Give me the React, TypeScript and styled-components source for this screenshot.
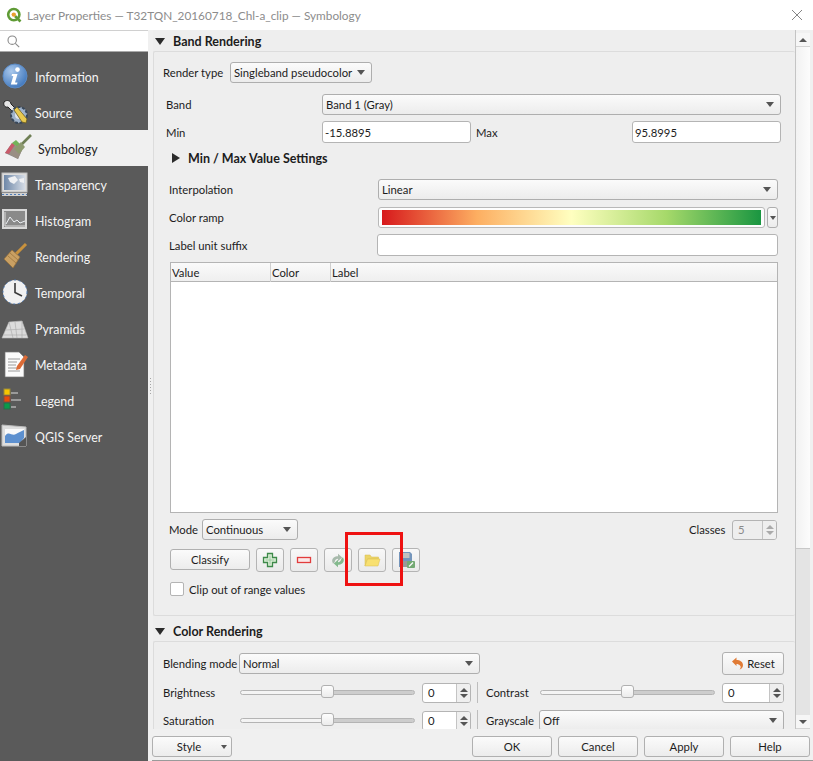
import React from 'react';
import styled, { createGlobalStyle } from 'styled-components';

const GlobalStyle = createGlobalStyle`
  html, body { margin: 0; padding: 0; background: #fff; }
  * { box-sizing: border-box; }
`;

const Window = styled.div`
  width: 813px;
  height: 761px;
  display: flex;
  flex-direction: column;
  overflow: hidden;
  background: #f0f0f0;
  color: #1c1c1c;
  font-family: Lato, 'Open Sans', sans-serif;
  font-size: 11.3px;
`;

const TitleBar = styled.div`
  height: 30px;
  flex: none;
  display: flex;
  align-items: center;
  padding: 0 10px 0 6px;
  background: #fff;
  color: #8c8c8c;
  gap: 5px;
`;

const TitleText = styled.span`
  flex: 1;
  font-size: 11.8px;
  white-space: nowrap;
`;

const Body = styled.div`
  flex: 1;
  min-height: 0;
  display: flex;
`;

const Sidebar = styled.div`
  width: 148px;
  flex: none;
  background: #5a5a5a;
`;

const SearchBox = styled.div`
  height: 22px;
  margin-bottom: 6px;
  padding-left: 7px;
  display: flex;
  align-items: center;
  background: #fff;
  border-bottom: 1px solid #a9a9a9;
  border-top: 1px solid #d0d0d0;
`;

const NavItem = styled.div<{ $active?: boolean }>`
  height: 36px;
  display: flex;
  align-items: center;
  gap: 5px;
  padding-left: ${(p) => (p.$active ? 3 : 0)}px;
  font-size: 12.4px;
  color: ${(p) => (p.$active ? '#1c1c1c' : '#f4f4f4')};
  background: ${(p) => (p.$active ? '#f0f0f0' : 'transparent')};
`;

const NavLabel = styled.span`
  padding-top: 2px;
`;

const NavIcon = styled.svg`
  width: 30px;
  height: 30px;
  flex: none;
`;

const Splitter = styled.div`
  width: 5px;
  flex: none;
  display: flex;
  align-items: center;
  padding-left: 2px;
  background: #f0f0f0;
`;

const SplitterDots = styled.div`
  width: 1px;
  height: 16px;
  margin-bottom: 20px;
  background: repeating-linear-gradient(to bottom, #a5a5a5 0 1px, transparent 1px 3px);
`;

const RightPane = styled.div`
  flex: 1;
  min-width: 0;
  display: flex;
  flex-direction: column;
`;

const ScrollArea = styled.div`
  height: 699px;
  flex: none;
  display: flex;
  overflow: hidden;
`;

const Content = styled.div`
  width: 643px;
  flex: none;
  background: #eeeeee;
  border-right: 1px solid #c4c4c4;
`;

const Scrollbar = styled.div`
  width: 14px;
  flex: none;
  margin-top: 3px;
  display: flex;
  flex-direction: column;
  background: #e4e4e4;
`;

const ScrollButton = styled.div`
  height: 14px;
  flex: none;
  display: flex;
  align-items: center;
  justify-content: center;
  background: #f6f6f6;
  border-bottom: 1px solid #d4d4d4;
`;

const ScrollThumb = styled.div`
  height: 502px;
  flex: none;
  background: linear-gradient(to right, #f2f2f2, #fcfcfc);
  border-bottom: 1px solid #c8c8c8;
`;

const ScrollTrack = styled.div`
  flex: 1;
`;

const SectionHeader = styled.div<{ $mt?: number }>`
  height: 21px;
  margin-top: ${(p) => p.$mt ?? 0}px;
  padding: 2px 0 0 2px;
  display: flex;
  align-items: center;
  gap: 8px;
  font-size: 12.5px;
  font-weight: 700;
`;

const Triangle = styled.span<{ $dir?: 'down' | 'right' }>`
  width: 0;
  height: 0;
  flex: none;
  ${(p) =>
    p.$dir === 'right'
      ? 'border-top: 5.5px solid transparent; border-bottom: 5.5px solid transparent; border-left: 8px solid #2b2b2b;'
      : 'border-left: 5.5px solid transparent; border-right: 5.5px solid transparent; border-top: 7px solid #2b2b2b;'}
`;

const GroupBox = styled.div<{ $h: number }>`
  height: ${(p) => p.$h}px;
  border: 1px solid #dcdcdc;
  border-right: none;
  border-radius: 2px;
  overflow: hidden;
`;

const FormRow = styled.div<{ $mt: number; $left: number; $h?: number }>`
  position: relative;
  height: ${(p) => p.$h ?? 21}px;
  margin-top: ${(p) => p.$mt}px;
  padding-left: ${(p) => p.$left}px;
  display: flex;
  align-items: center;
  flex: none;
`;

const Label = styled.span<{ $w?: number; $pad?: number }>`
  ${(p) => (p.$w ? `width: ${p.$w}px; flex: none;` : '')}
  padding-left: ${(p) => p.$pad ?? 0}px;
  white-space: nowrap;
`;

const BoldLabel = styled.span`
  margin-left: 8px;
  font-size: 12.5px;
  font-weight: 700;
`;

const Push = styled.div`
  flex: 1;
`;

const Gap = styled.div<{ $w: number }>`
  width: ${(p) => p.$w}px;
  flex: none;
`;

const Combo = styled.div<{ $w: number; $h?: number }>`
  width: ${(p) => p.$w}px;
  height: ${(p) => p.$h ?? 21}px;
  flex: none;
  padding: 0 6px 0 3px;
  display: flex;
  align-items: center;
  justify-content: space-between;
  background: linear-gradient(to bottom, #fbfbfb, #ececec);
  border: 1px solid #aeaeae;
  border-radius: 3px;
  white-space: nowrap;
`;

const Caret = styled.span`
  width: 0;
  height: 0;
  flex: none;
  border-left: 4.5px solid transparent;
  border-right: 4.5px solid transparent;
  border-top: 5px solid #555;
`;

const TextInput = styled.div<{ $w: number; $h?: number }>`
  width: ${(p) => p.$w}px;
  height: ${(p) => p.$h ?? 22}px;
  flex: none;
  padding-left: 2px;
  display: flex;
  align-items: center;
  background: #fff;
  border: 1px solid #b4b4b4;
  border-radius: 3px;
`;

const RampButton = styled.div`
  width: 387px;
  height: 21px;
  flex: none;
  padding: 2px 3px;
  background: #fdfdfd;
  border: 1px solid #b8b8b8;
  border-radius: 3px;
`;

const RampFill = styled.div`
  height: 100%;
  background: linear-gradient(to right, #d7191c, #fdae61 25%, #ffffc0 50%, #a6d96a 75%, #1a9641);
`;

const RampMenu = styled.div`
  width: 11px;
  height: 21px;
  flex: none;
  margin-left: 2px;
  display: flex;
  align-items: center;
  justify-content: center;
  background: linear-gradient(to bottom, #fbfbfb, #ececec);
  border: 1px solid #aeaeae;
  border-radius: 3px;
`;

const SmallCaret = styled(Caret)`
  border-left-width: 3.5px;
  border-right-width: 3.5px;
  border-top-width: 4px;
`;

const ClassTable = styled.div`
  width: 608px;
  height: 251px;
  margin: 6px 0 0 16px;
  flex: none;
  background: #fff;
  border: 1px solid #b4b4b4;
`;

const TableHead = styled.div`
  height: 19px;
  display: grid;
  grid-template-columns: 100px 60px 1fr;
  background: linear-gradient(to bottom, #fafafa, #efefef);
  border-bottom: 1px solid #b4b4b4;
`;

const HeadCell = styled.div`
  padding-left: 1px;
  line-height: 19px;
  border-right: 1px solid #cfcfcf;
  &:last-child { border-right: none; }
`;

const SpinBox = styled.div<{ $w: number; $disabled?: boolean }>`
  width: ${(p) => p.$w}px;
  height: 20px;
  flex: none;
  display: flex;
  overflow: hidden;
  color: ${(p) => (p.$disabled ? '#8a8a8a' : 'inherit')};
  background: ${(p) => (p.$disabled ? '#eeeeee' : '#fff')};
  border: 1px solid #b4b4b4;
  border-radius: 3px;
`;

const SpinValue = styled.span`
  flex: 1;
  padding-left: 5px;
  line-height: 18px;
`;

const SpinArrows = styled.div`
  width: 14px;
  flex: none;
  display: flex;
  flex-direction: column;
  align-items: center;
  justify-content: center;
  gap: 2px;
  background: #efefef;
  border-left: 1px solid #c4c4c4;
`;

const SpinUp = styled.span<{ $disabled?: boolean }>`
  width: 0;
  height: 0;
  border-left: 4px solid transparent;
  border-right: 4px solid transparent;
  border-bottom: 4px solid ${(p) => (p.$disabled ? '#aaa' : '#555')};
`;

const SpinDown = styled.span<{ $disabled?: boolean }>`
  width: 0;
  height: 0;
  border-left: 4px solid transparent;
  border-right: 4px solid transparent;
  border-top: 4px solid ${(p) => (p.$disabled ? '#aaa' : '#555')};
`;

const PushButton = styled.div<{ $w: number; $h?: number }>`
  width: ${(p) => p.$w}px;
  height: ${(p) => p.$h ?? 21}px;
  flex: none;
  display: flex;
  align-items: center;
  justify-content: center;
  gap: 3px;
  background: linear-gradient(to bottom, #fbfbfb, #ececec);
  border: 1px solid #b0b0b0;
  border-radius: 3px;
`;

const ClassifyButton = styled(PushButton)`
  margin: 1px 0 2px;
`;

const IconButton = styled.div`
  width: 28px;
  height: 24px;
  flex: none;
  margin-left: 6px;
  display: flex;
  align-items: center;
  justify-content: center;
  background: linear-gradient(to bottom, #f8f8f8, #eaeaea);
  border: 1px solid #b4b4b4;
  border-radius: 3px;
`;

const Highlight = styled.div`
  position: absolute;
  left: 191px;
  top: -16px;
  width: 58px;
  height: 54px;
  border: 3px solid #ee1111;
  pointer-events: none;
`;

const CheckBox = styled.span`
  width: 14px;
  height: 14px;
  flex: none;
  margin-right: 5px;
  background: #fff;
  border: 1px solid #b4b4b4;
  border-radius: 2px;
`;

const Slider = styled.div`
  position: relative;
  width: 175px;
  height: 5px;
  flex: none;
  background: linear-gradient(to right, #f4f4f4 50%, #cdcdcd 50%);
  border: 1px solid #b4b4b4;
  border-radius: 3px;
`;

const SliderHandle = styled.div`
  position: absolute;
  left: 80px;
  top: -6px;
  width: 13px;
  height: 13px;
  background: linear-gradient(to bottom, #fdfdfd, #ececec);
  border: 1px solid #b0b0b0;
  border-radius: 3px;
`;

const RowDivider = styled.div`
  width: 1px;
  height: 21px;
  flex: none;
  margin: 0 8px 0 6px;
  background: #bdbdbd;
`;

const Footer = styled.div`
  flex: 1;
  display: flex;
  align-items: flex-start;
  gap: 6px;
  padding: 7px 3px 0 0;
  margin-left: -1px;
  background: #f0f0f0;
  border-bottom: 1px solid #9a9a9a;
`;

const StyleButton = styled(PushButton)`
  position: relative;
  padding-right: 6px;
`;

const StyleCaret = styled(SmallCaret)`
  position: absolute;
  right: 4px;
  top: 8px;
`;

const CloseIcon = () => (
  <svg width="12" height="12" viewBox="0 0 12 12" fill="none" stroke="#777" strokeWidth="0.9">
    <path d="M1 1 L11 11 M11 1 L1 11" />
  </svg>
);

const QgisLogo = () => (
  <svg width="16" height="16" viewBox="0 0 16 16" fill="none">
    <circle cx="7.8" cy="7.6" r="5.6" stroke="#5f9b35" strokeWidth="2.6" />
    <path d="M9 9 L14.5 14.5" stroke="#5f9b35" strokeWidth="2.6" />
    <circle cx="7.8" cy="7.6" r="2.2" fill="#e9a02e" />
  </svg>
);

const SearchGlyph = () => (
  <svg width="13" height="13" viewBox="0 0 13 13" fill="none" stroke="#8a8a8a" strokeWidth="1.1">
    <circle cx="5.2" cy="5.2" r="4.2" />
    <path d="M8.3 8.3 L12.2 12.2" />
  </svg>
);

const InfoIcon = () => (
  <NavIcon viewBox="0 0 30 30">
    <defs>
      <radialGradient id="infoBlue" cx="35%" cy="30%" r="75%">
        <stop offset="0" stopColor="#a9c8ec" />
        <stop offset="1" stopColor="#3f77bd" />
      </radialGradient>
    </defs>
    <circle cx="15" cy="15" r="12" fill="url(#infoBlue)" stroke="#5b8ac4" />
    <circle cx="17.5" cy="8.6" r="2.3" fill="#fff" />
    <path d="M12 13 H17.5 L15 21.5 H17.5 L17 23.5 H10.8 L13.3 15 H11.6 Z" fill="#fff" />
  </NavIcon>
);

const SourceIcon = () => (
  <NavIcon viewBox="0 0 30 30">
    <path d="M4 5 C7 2 11 4 11 7 L20 16 L17 19 L8 10 C5 11 3 8 4 5 Z" fill="#e6e6e6" stroke="#222" strokeWidth="1" />
    <circle cx="19" cy="18" r="8" fill="#9fb3cb" stroke="#39485a" strokeWidth="2" strokeDasharray="3 1.5" />
    <circle cx="19" cy="18" r="4" fill="#dfe6ee" />
    <path d="M14 13 L17 10 L27 22 L26 26 L22 25 Z" fill="#e8c94f" stroke="#6b5a1e" strokeWidth="0.8" />
  </NavIcon>
);

const SymbologyIcon = () => (
  <NavIcon viewBox="0 0 30 30">
    <path d="M2 20 L9 10 L19 17 L15 26 Z" fill="#8a8a8a" />
    <path d="M2 20 L9 10 L12 12 L6 21 Z" fill="#c95a6a" />
    <path d="M9 10 L13 7 L19 13 L15 15 Z" fill="#74b35a" />
    <path d="M6 21 L12 12 L19 17 L15 26 Z" fill="#9a8f84" />
    <path d="M18 12 L28 2" stroke="#6f7f55" strokeWidth="2.6" />
    <path d="M11 16 L18 9 L22 14 L16 21 Z" fill="#8e9a70" />
  </NavIcon>
);

const TransparencyIcon = () => (
  <NavIcon viewBox="0 0 30 30">
    <defs>
      <linearGradient id="seaFade" x1="0" x2="1" y1="0" y2="0">
        <stop offset="0" stopColor="#6f88a8" />
        <stop offset="1" stopColor="#d5dce6" />
      </linearGradient>
    </defs>
    <rect x="2" y="4" width="25" height="19" fill="#dcdcdc" stroke="#bdbdbd" />
    <rect x="4" y="6" width="21" height="15" fill="url(#seaFade)" />
    <path d="M8 9 L15 7 L18 11 L14 15 L10 13 Z M19 10 L24 9 L24 14 L20 13 Z" fill="#eef0f3" />
    <rect x="2" y="24" width="25" height="3" fill="#d0d0d0" />
    <path d="M2 25.5 H27" stroke="#4d7ab5" strokeDasharray="2 2" />
  </NavIcon>
);

const HistogramIcon = () => (
  <NavIcon viewBox="0 0 30 30">
    <rect x="2" y="4" width="25" height="20" fill="#d8d8d8" />
    <rect x="4" y="6" width="21" height="16" fill="#8a8a8a" />
    <path d="M6 19 L10 12 L14 17 L17 15 L20 18 L25 16" fill="none" stroke="#eef2f6" strokeWidth="1" />
    <path d="M5 21 H25 M5 7 V21" stroke="#eee" strokeWidth="0.8" />
  </NavIcon>
);

const RenderingIcon = () => (
  <NavIcon viewBox="0 0 30 30">
    <path d="M16 13 L26 3" stroke="#c9923d" strokeWidth="3" />
    <path d="M4 18 L12 9 L20 16 L13 27 Z" fill="#c9a063" stroke="#96703a" strokeWidth="0.7" />
    <path d="M8 15 L16 22 M10 12 L18 19" stroke="#96703a" strokeWidth="0.7" />
  </NavIcon>
);

const TemporalIcon = () => (
  <NavIcon viewBox="0 0 30 30">
    <circle cx="15" cy="15" r="12" fill="#f1f1f1" stroke="#4b79b5" strokeWidth="1" strokeDasharray="2 2.6" />
    <path d="M15 6 V15.5 L22 19" fill="none" stroke="#3a3a3a" strokeWidth="1.6" />
  </NavIcon>
);

const PyramidsIcon = () => (
  <NavIcon viewBox="0 0 30 30">
    <path d="M2 25 L9 9 L22 8 L28 25 Z" fill="#dcdcdc" stroke="#bbb" strokeWidth="0.6" />
    <path d="M6 17 L24 16 M9 9 L13 25 M15 9 L17 25 M22 8 L22 25 M4 22 H26" stroke="#a8a8a8" strokeWidth="0.6" fill="none" />
  </NavIcon>
);

const MetadataIcon = () => (
  <NavIcon viewBox="0 0 30 30">
    <path d="M5 3 H19 L24 8 V28 H5 Z" fill="#fbfbfb" stroke="#777" strokeWidth="0.7" />
    <path d="M8 10 H20 M8 13 H17 M8 16 H16 M8 19 H20 M8 22 H20" stroke="#9a9a9a" strokeWidth="1" />
    <path d="M17 17 L25 6 L28 8 L20 20 L16 21 Z" fill="#dc6b36" />
  </NavIcon>
);

const LegendIcon = () => (
  <NavIcon viewBox="0 0 30 30">
    <rect x="4" y="4" width="6" height="6" fill="#f7c600" stroke="#9a8a3a" />
    <rect x="4" y="11" width="6" height="6" fill="#e84a0c" stroke="#8a4a3a" />
    <rect x="4" y="18" width="6" height="6" fill="#0a9a4a" stroke="#2a6a4a" />
    <path d="M11 8 H18 M11 15 H21 M11 22 H16" stroke="#9a9a9a" strokeWidth="2" />
  </NavIcon>
);

const ServerIcon = () => (
  <NavIcon viewBox="0 0 30 30">
    <path d="M2 4 L26 6 V25 H2 Z" fill="#dedede" stroke="#bbb" />
    <rect x="5" y="8" width="19" height="14" fill="#fafafa" />
    <path d="M5 15 C9 9 12 16 16 13 C19 11 22 10 24 9 V17 L20 22 H5 Z" fill="#5d90cf" />
    <path d="M19 22 L26 16 V25 H19 Z" fill="#555" />
  </NavIcon>
);

const PlusIcon = () => (
  <svg width="16" height="16" viewBox="0 0 16 16">
    <path d="M5.5 1.5 H10.5 V5.5 H14.5 V10.5 H10.5 V14.5 H5.5 V10.5 H1.5 V5.5 H5.5 Z" fill="#dff0da" stroke="#3e8a4a" strokeWidth="1.3" />
    <path d="M8 3.5 V12.5 M3.5 8 H12.5" stroke="#9ccaa0" strokeWidth="1" />
  </svg>
);

const MinusIcon = () => (
  <svg width="16" height="16" viewBox="0 0 16 16">
    <rect x="1.5" y="5.5" width="13" height="5" fill="#fbe8e8" stroke="#e23c3c" strokeWidth="1.3" />
  </svg>
);

const RefreshIcon = () => (
  <svg width="16" height="15" viewBox="0 0 18 18" opacity="0.75">
    <path d="M2 10 C2 6 5 4 9 4 V1 L14 5.5 L9 10 V7 C7 7 5.5 8 5 11 L3 13 Z" fill="#8fa895" />
    <path d="M16 8 C16 12 13 14 9 14 V17 L4 12.5 L9 8 V11 C11 11 12.5 10 13 7 L15 5 Z" fill="#5fa86c" />
  </svg>
);

const FolderIcon = () => (
  <svg width="17" height="15" viewBox="0 0 17 15">
    <path d="M1 2 H6 L7.5 4 H14.5 V6 H3.5 L1 13 Z" fill="#ecd568" stroke="#d8bd50" strokeWidth="0.5" />
    <path d="M3.5 6 H16 L14 13 H1 Z" fill="#f8e070" stroke="#d8bd50" strokeWidth="0.5" />
  </svg>
);

const SaveIcon = () => (
  <svg width="18" height="18" viewBox="0 0 18 18" opacity="0.85">
    <path d="M2 1 H13 L15 3 V16 H2 Z" fill="#5f86b3" />
    <rect x="4.5" y="2" width="8" height="5" fill="#b9b9b9" />
    <rect x="4" y="10" width="9" height="6" fill="#8b8b8b" />
    <rect x="10" y="10" width="8" height="7" rx="1" fill="#5f9e5f" />
    <path d="M12 15.5 L16 11.5" stroke="#fff" strokeWidth="1.2" />
  </svg>
);

const ResetIcon = () => (
  <svg width="13" height="13" viewBox="0 0 13 13">
    <path d="M1 4.5 L5.5 0.5 V3 C9 3 12 5 12 8 C12 10.5 10.5 12 8.5 12.5 C10 11 10 9.5 9 8.5 C8 7.5 7 7 5.5 7 V9 Z" fill="#e07b35" />
  </svg>
);

const navItems: { label: string; icon: React.ReactNode; active?: boolean }[] = [
  { label: 'Information', icon: <InfoIcon /> },
  { label: 'Source', icon: <SourceIcon /> },
  { label: 'Symbology', icon: <SymbologyIcon />, active: true },
  { label: 'Transparency', icon: <TransparencyIcon /> },
  { label: 'Histogram', icon: <HistogramIcon /> },
  { label: 'Rendering', icon: <RenderingIcon /> },
  { label: 'Temporal', icon: <TemporalIcon /> },
  { label: 'Pyramids', icon: <PyramidsIcon /> },
  { label: 'Metadata', icon: <MetadataIcon /> },
  { label: 'Legend', icon: <LegendIcon /> },
  { label: 'QGIS Server', icon: <ServerIcon /> },
];

const Spin = ({ w, value, disabled }: { w: number; value: string; disabled?: boolean }) => (
  <SpinBox $w={w} $disabled={disabled}>
    <SpinValue>{value}</SpinValue>
    <SpinArrows>
      <SpinUp $disabled={disabled} />
      <SpinDown $disabled={disabled} />
    </SpinArrows>
  </SpinBox>
);

export default function App() {
  return (
    <Window>
      <GlobalStyle />
      <TitleBar>
        <QgisLogo />
        <TitleText>Layer Properties — T32TQN_20160718_Chl-a_clip — Symbology</TitleText>
        <CloseIcon />
      </TitleBar>
      <Body>
        <Sidebar>
          <SearchBox>
            <SearchGlyph />
          </SearchBox>
          {navItems.map((item) => (
            <NavItem key={item.label} $active={item.active}>
              {item.icon}
              <NavLabel>{item.label}</NavLabel>
            </NavItem>
          ))}
        </Sidebar>
        <Splitter>
          <SplitterDots />
        </Splitter>
        <RightPane>
          <ScrollArea>
            <Content>
              <SectionHeader>
                <Triangle />
                Band Rendering
              </SectionHeader>
              <GroupBox $h={565}>
                <FormRow $mt={10} $left={9}>
                  <Label $w={67}>Render type</Label>
                  <Combo $w={142}>
                    Singleband pseudocolor
                    <Caret />
                  </Combo>
                </FormRow>
                <FormRow $mt={11} $left={12}>
                  <Label $w={156}>Band</Label>
                  <Combo $w={459}>
                    Band 1 (Gray)
                    <Caret />
                  </Combo>
                </FormRow>
                <FormRow $mt={6} $left={12} $h={22}>
                  <Label $w={156}>Min</Label>
                  <TextInput $w={149}>-15.8895</TextInput>
                  <Label $w={161} $pad={5}>
                    Max
                  </Label>
                  <TextInput $w={149}>95.8995</TextInput>
                </FormRow>
                <FormRow $mt={7} $left={18} $h={16}>
                  <Triangle $dir="right" />
                  <BoldLabel>Min / Max Value Settings</BoldLabel>
                </FormRow>
                <FormRow $mt={13} $left={15}>
                  <Label $w={209}>Interpolation</Label>
                  <Combo $w={400}>
                    Linear
                    <Caret />
                  </Combo>
                </FormRow>
                <FormRow $mt={7} $left={15}>
                  <Label $w={209}>Color ramp</Label>
                  <RampButton>
                    <RampFill />
                  </RampButton>
                  <RampMenu>
                    <SmallCaret />
                  </RampMenu>
                </FormRow>
                <FormRow $mt={6} $left={15} $h={22}>
                  <Label $w={208}>Label unit suffix</Label>
                  <TextInput $w={401} />
                </FormRow>
                <ClassTable>
                  <TableHead>
                    <HeadCell>Value</HeadCell>
                    <HeadCell>Color</HeadCell>
                    <HeadCell>Label</HeadCell>
                  </TableHead>
                </ClassTable>
                <FormRow $mt={6} $left={15}>
                  <Label $w={33}>Mode</Label>
                  <Combo $w={96}>
                    Continuous
                    <Caret />
                  </Combo>
                  <Push />
                  <Label $w={43}>Classes</Label>
                  <Spin w={45} value="5" disabled />
                  <Gap $w={18} />
                </FormRow>
                <FormRow $mt={8} $left={16} $h={24}>
                  <ClassifyButton $w={80}>Classify</ClassifyButton>
                  <IconButton>
                    <PlusIcon />
                  </IconButton>
                  <IconButton>
                    <MinusIcon />
                  </IconButton>
                  <IconButton>
                    <RefreshIcon />
                  </IconButton>
                  <IconButton>
                    <FolderIcon />
                  </IconButton>
                  <IconButton>
                    <SaveIcon />
                  </IconButton>
                  <Highlight />
                </FormRow>
                <FormRow $mt={9} $left={16} $h={16}>
                  <CheckBox />
                  Clip out of range values
                </FormRow>
              </GroupBox>
              <SectionHeader $mt={4}>
                <Triangle />
                Color Rendering
              </SectionHeader>
              <GroupBox $h={100}>
                <FormRow $mt={11} $left={9}>
                  <Label $w={76}>Blending mode</Label>
                  <Combo $w={241}>
                    Normal
                    <Caret />
                  </Combo>
                  <Push />
                  <PushButton $w={62} $h={23}>
                    <ResetIcon />
                    Reset
                  </PushButton>
                  <Gap $w={11} />
                </FormRow>
                <FormRow $mt={8} $left={9} $h={21}>
                  <Label $w={77}>Brightness</Label>
                  <Slider>
                    <SliderHandle />
                  </Slider>
                  <Gap $w={7} />
                  <Spin w={49} value="0" />
                  <RowDivider />
                  <Label $w={54}>Contrast</Label>
                  <Slider>
                    <SliderHandle />
                  </Slider>
                  <Gap $w={7} />
                  <Spin w={62} value="0" />
                </FormRow>
                <FormRow $mt={7} $left={9} $h={21}>
                  <Label $w={77}>Saturation</Label>
                  <Slider>
                    <SliderHandle />
                  </Slider>
                  <Gap $w={7} />
                  <Spin w={49} value="0" />
                  <RowDivider />
                  <Label $w={53}>Grayscale</Label>
                  <Combo $w={245}>
                    Off
                    <Caret />
                  </Combo>
                </FormRow>
              </GroupBox>
            </Content>
            <Scrollbar>
              <ScrollButton>
                <SpinUp />
              </ScrollButton>
              <ScrollThumb />
              <ScrollTrack />
              <ScrollButton>
                <SpinDown />
              </ScrollButton>
            </Scrollbar>
          </ScrollArea>
          <Footer>
            <StyleButton $w={80}>
              Style
              <StyleCaret />
            </StyleButton>
            <Push />
            <PushButton $w={80}>OK</PushButton>
            <PushButton $w={80}>Cancel</PushButton>
            <PushButton $w={80}>Apply</PushButton>
            <PushButton $w={80}>Help</PushButton>
          </Footer>
        </RightPane>
      </Body>
    </Window>
  );
}
